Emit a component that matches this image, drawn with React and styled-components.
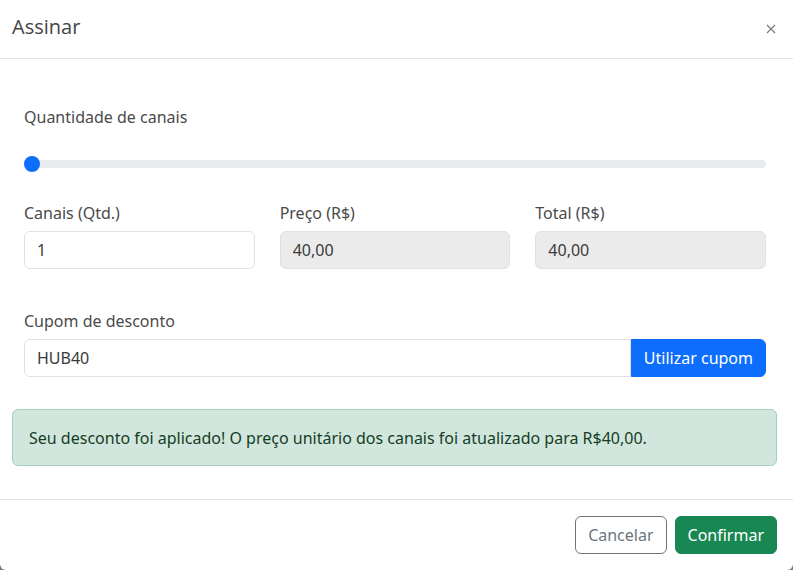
import React, { useState } from 'react';
import styled, { createGlobalStyle } from 'styled-components';

const GlobalStyle = createGlobalStyle`
  * {
    box-sizing: border-box;
  }
  body {
    margin: 0;
    background: #7a7a7a;
    font-family: "Noto Sans", "Open Sans", sans-serif;
    color: #4a4a4a;
  }
`;

const Modal = styled.div`
  width: 793px;
  height: 570px;
  background: #fff;
  border-radius: 0 0 6px 6px;
  display: flex;
  flex-direction: column;
`;

const Header = styled.div`
  height: 59px;
  padding: 0 17px 0 12px;
  display: flex;
  align-items: center;
  justify-content: space-between;
  border-bottom: 1px solid #dee2e6;
`;

const Title = styled.h5`
  margin: 0;
  font-family: "Open Sans", sans-serif;
  font-size: 20px;
  font-weight: 400;
  color: #444;
  padding-bottom: 6px;
`;

const Close = styled.button`
  border: 0;
  background: none;
  padding: 0;
  cursor: pointer;
  color: #777;
  display: flex;
`;

const Body = styled.div`
  flex: 1;
  padding: 12px 16px 12px 12px;
  display: flex;
  flex-direction: column;
`;

const Form = styled.div`
  padding: 34px 11px 0 12px;
  display: flex;
  flex-direction: column;
`;

const Label = styled.label`
  display: block;
  font-size: 16px;
  line-height: 24px;
  color: #4a4a4a;
  margin-bottom: ${p => (p.gap === undefined ? 6 : p.gap)}px;
`;

const Range = styled.input`
  -webkit-appearance: none;
  appearance: none;
  width: 100%;
  height: 16px;
  margin: 27px 0 0;
  background: transparent;
  display: block;

  &::-webkit-slider-runnable-track {
    height: 8px;
    background: #e9ecef;
    border-radius: 4px;
  }
  &::-webkit-slider-thumb {
    -webkit-appearance: none;
    width: 16px;
    height: 16px;
    margin-top: -4px;
    border-radius: 50%;
    background: #0d6efd;
    border: 0;
  }
`;

const Grid = styled.div`
  display: grid;
  grid-template-columns: repeat(3, 1fr);
  column-gap: 25px;
  margin-top: 29px;
`;

const Input = styled.input`
  display: block;
  width: 100%;
  height: 38px;
  padding: 0 12px;
  font-family: inherit;
  font-size: 16px;
  color: #3a3a3a;
  background: ${p => (p.disabled ? '#ebebeb' : '#fff')};
  border: 1px solid #dee2e6;
  border-radius: ${p => p.radius || '6px'};
  outline: none;
`;

const Coupon = styled.div`
  margin-top: 40px;
`;

const InputGroup = styled.div`
  display: flex;
`;

const Button = styled.button`
  height: 38px;
  padding: 0 ${p => p.px || 12}px;
  font-family: inherit;
  font-size: 16px;
  border-radius: ${p => p.radius || '6px'};
  cursor: pointer;
  white-space: nowrap;
  color: ${p => p.color || '#fff'};
  background: ${p => p.bg || 'transparent'};
  border: 1px solid ${p => p.line || p.bg || 'transparent'};
`;

const Alert = styled.div`
  margin-top: 32px;
  padding: 0 16px;
  height: 57px;
  display: flex;
  align-items: center;
  font-size: 16px;
  color: #163d24;
  background: #d1e7dd;
  border: 1px solid #a3cfbb;
  border-radius: 6px;
`;

const Footer = styled.div`
  height: 71px;
  padding: 0 16px 0 12px;
  display: flex;
  align-items: center;
  justify-content: flex-end;
  gap: 8px;
  border-top: 1px solid #dee2e6;
`;

export default function App() {
  const [qty, setQty] = useState(1);
  const [coupon, setCoupon] = useState('HUB40');
  const price = 40;
  const fmt = v => v.toFixed(2).replace('.', ',');

  return (
    <>
      <GlobalStyle />
      <Modal>
        <Header>
          <Title>Assinar</Title>
          <Close aria-label="Fechar">
            <svg width="10" height="10" viewBox="0 0 10 10">
              <path d="M1 1L9 9M9 1L1 9" stroke="currentColor" strokeWidth="1.1" />
            </svg>
          </Close>
        </Header>

        <Body>
          <Form>
            <Label gap={0}>Quantidade de canais</Label>
            <Range
              type="range"
              min="1"
              max="100"
              value={qty}
              onChange={e => setQty(Number(e.target.value))}
            />

            <Grid>
              <div>
                <Label>Canais (Qtd.)</Label>
                <Input value={qty} onChange={e => setQty(Number(e.target.value) || 1)} />
              </div>
              <div>
                <Label>Preço (R$)</Label>
                <Input value={fmt(price)} disabled readOnly />
              </div>
              <div>
                <Label>Total (R$)</Label>
                <Input value={fmt(price * qty)} disabled readOnly />
              </div>
            </Grid>

            <Coupon>
              <Label>Cupom de desconto</Label>
              <InputGroup>
                <Input
                  radius="6px 0 0 6px"
                  value={coupon}
                  onChange={e => setCoupon(e.target.value)}
                />
                <Button bg="#0d6efd" radius="0 6px 6px 0">Utilizar cupom</Button>
              </InputGroup>
            </Coupon>
          </Form>

          <Alert>
            Seu desconto foi aplicado! O preço unitário dos canais foi atualizado para R$40,00.
          </Alert>
        </Body>

        <Footer>
          <Button color="#6c757d" line="#6c757d">Cancelar</Button>
          <Button bg="#198754">Confirmar</Button>
        </Footer>
      </Modal>
    </>
  );
}
